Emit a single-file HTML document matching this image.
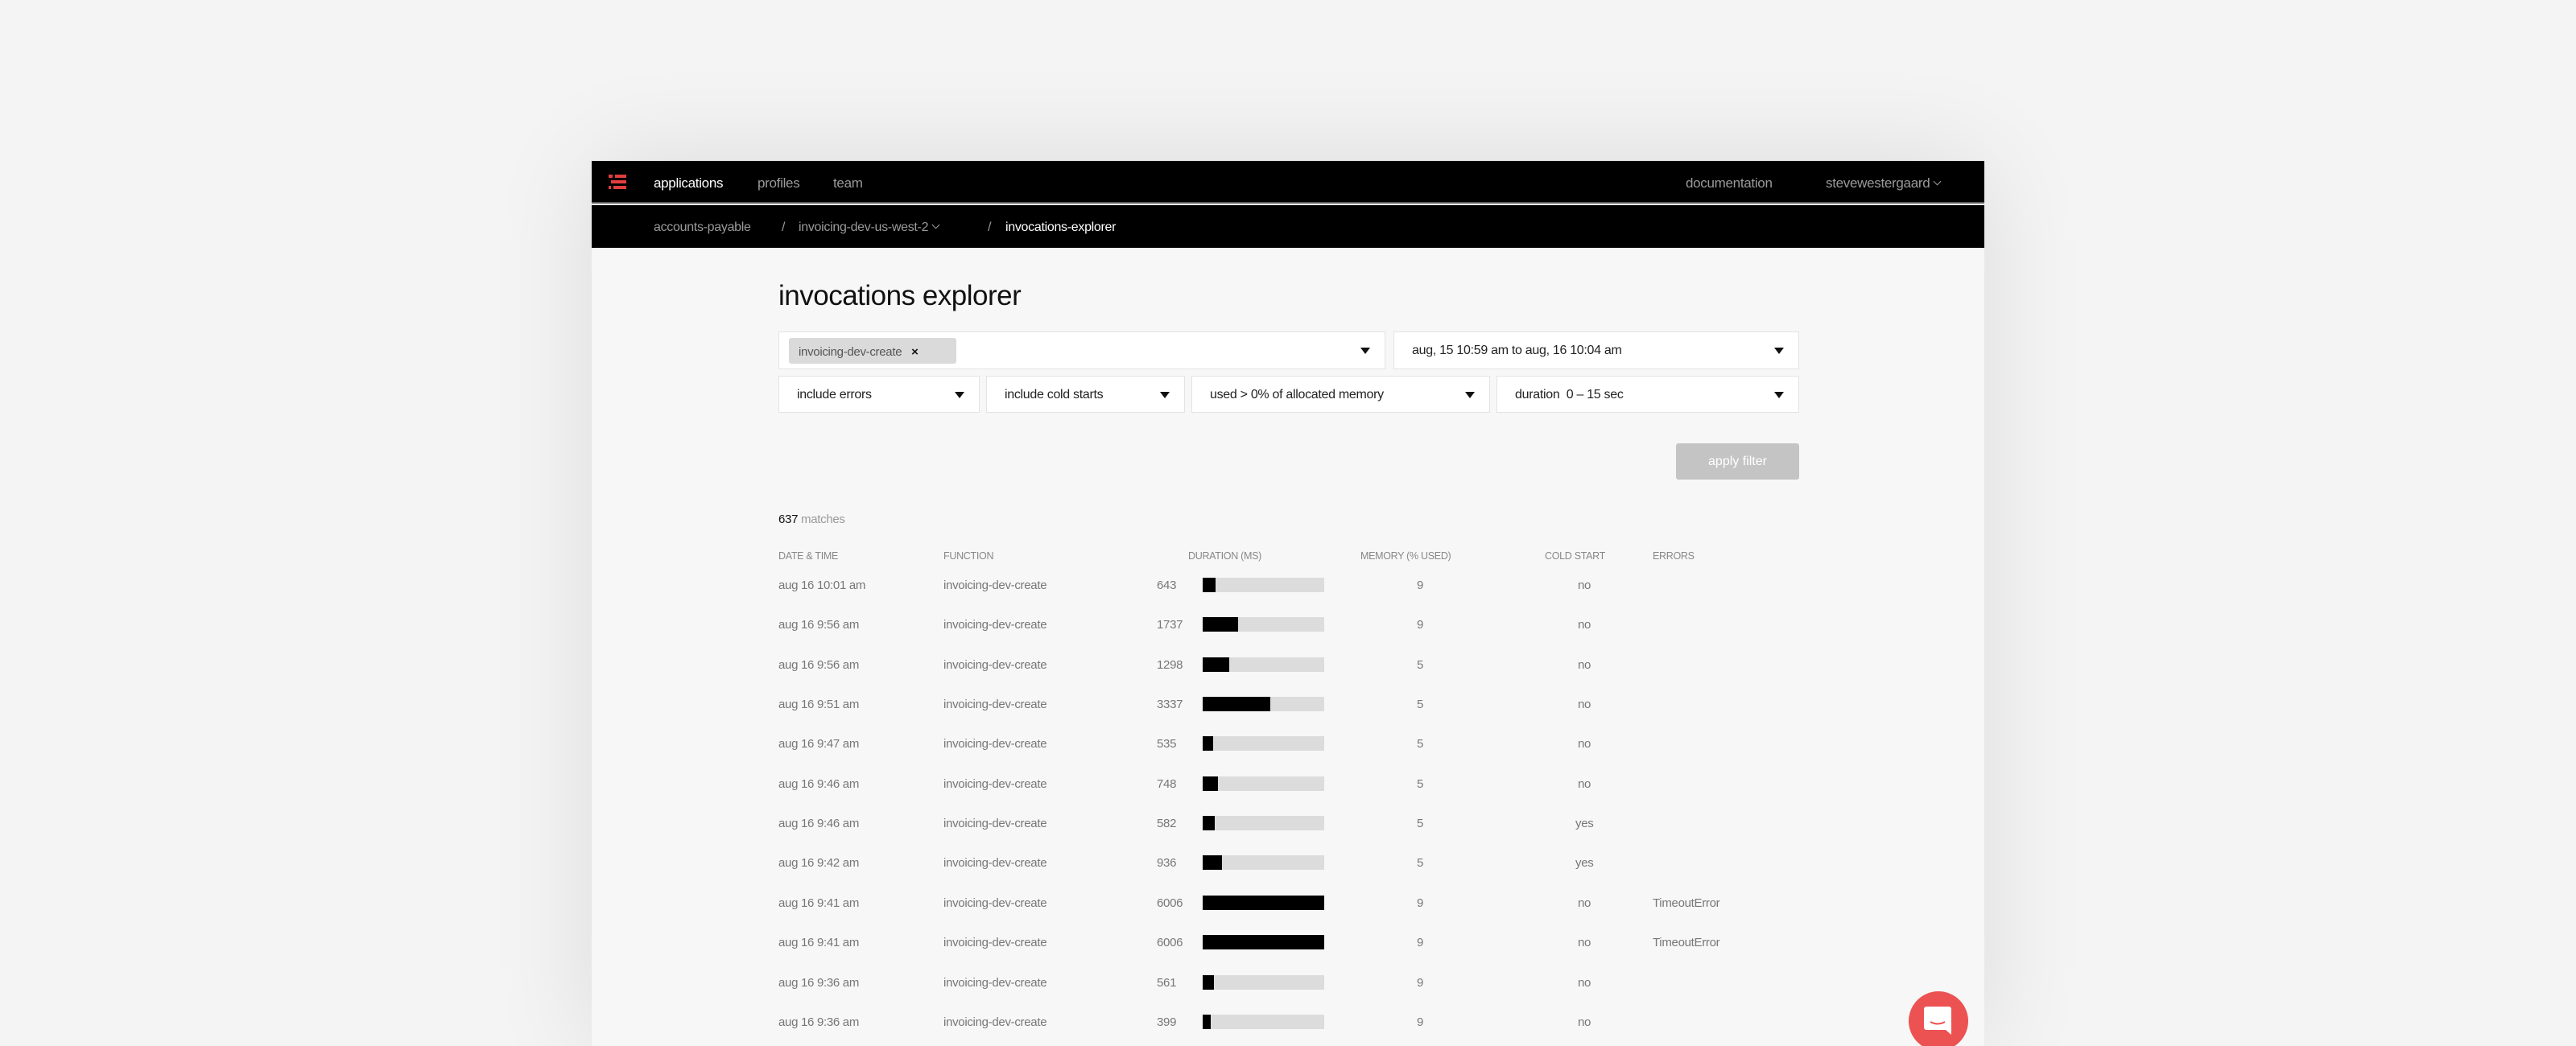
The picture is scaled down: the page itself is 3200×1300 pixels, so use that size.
<!DOCTYPE html>
<html><head><meta charset="utf-8"><style>
*{margin:0;padding:0;box-sizing:border-box}
html,body{width:3200px;height:1300px;overflow:hidden}
body{background:#f4f4f4;font-family:"Liberation Sans",sans-serif;position:relative}
.win{position:absolute;left:735px;top:200px;width:1730px;height:1100px;background:#f7f7f7;box-shadow:0 0 120px rgba(0,0,0,0.10)}
.nav{position:absolute;left:0;top:0;width:100%;height:53px;background:#000;border-bottom:2px solid #5a5a5a}
.sub{position:absolute;left:0;top:55px;width:100%;height:53px;background:#000}
.t{position:absolute;white-space:nowrap}
.nav .t{top:18px;font-size:17px;color:#9a9a9a;letter-spacing:-0.3px}
.sub .t{top:19px;font-size:16px;color:#9a9a9a;letter-spacing:-0.3px}
.cv{display:inline-block;width:7px;height:7px;border-right:1.5px solid #9a9a9a;border-bottom:1.5px solid #9a9a9a;transform:rotate(45deg);margin-left:6px;position:relative;top:-4px}
.box{position:absolute;background:#fff;border:1px solid #e3e3e3}
.box span{position:absolute;left:22px;top:14px;font-size:16px;color:#222;white-space:nowrap;letter-spacing:-0.3px}
.box i{position:absolute;right:18px;top:19px;width:0;height:0;border-left:6px solid transparent;border-right:6px solid transparent;border-top:8px solid #111}
.row .t{font-size:15px;color:#777;letter-spacing:-0.3px}
.hd{font-size:12.5px;color:#888;position:absolute;letter-spacing:-0.3px}
.bar{position:absolute;width:151px;height:18px;background:#dcdcdc}
.bar b{display:block;height:18px;background:#000}
</style></head><body>
<div class="win">
 <div class="nav">
  <svg style="position:absolute;left:21px;top:17px" width="23" height="18"><rect x="0" y="0" width="5" height="4" fill="#e23e3e"/><rect x="8" y="0" width="14" height="4" fill="#e23e3e"/><rect x="3" y="7" width="19" height="4" fill="#e23e3e"/><rect x="0" y="14" width="3" height="4" fill="#e23e3e"/><rect x="6" y="14" width="16" height="4" fill="#e23e3e"/></svg>
  <div class="t" style="left:77px;color:#fff">applications</div>
  <div class="t" style="left:206px">profiles</div>
  <div class="t" style="left:300px">team</div>
  <div class="t" style="left:1359px">documentation</div>
  <div class="t" style="left:1533px">stevewestergaard<span class="cv"></span></div>
 </div>
 <div class="sub">
  <div class="t" style="left:77px">accounts-payable</div>
  <div class="t" style="left:236px">/</div>
  <div class="t" style="left:257px">invoicing-dev-us-west-2<span class="cv"></span></div>
  <div class="t" style="left:492px">/</div>
  <div class="t" style="left:514px;color:#fff">invocations-explorer</div>
 </div>
 <div class="t" style="left:232px;top:148px;font-size:35px;color:#111;letter-spacing:-0.5px">invocations explorer</div>
 <div class="box" style="left:232px;top:212px;width:754px;height:47px"><div style="position:absolute;left:12px;top:7px;width:208px;height:32px;background:#dadada;border-radius:3px;font-size:15px;color:#555;padding:9px 0 0 12px;letter-spacing:-0.3px">invoicing-dev-create <b style="color:#111;margin-left:8px">×</b></div><i></i></div>
 <div class="box" style="left:996px;top:212px;width:504px;height:47px"><span>aug, 15 10:59 am to aug, 16 10:04 am</span><i></i></div>
 <div class="box" style="left:232px;top:267px;width:250px;height:46px"><span>include errors</span><i></i></div>
 <div class="box" style="left:490px;top:267px;width:247px;height:46px"><span>include cold starts</span><i></i></div>
 <div class="box" style="left:745px;top:267px;width:371px;height:46px"><span>used &gt; 0% of allocated memory</span><i></i></div>
 <div class="box" style="left:1124px;top:267px;width:376px;height:46px"><span>duration &nbsp;0 – 15 sec</span><i></i></div>
 <div style="position:absolute;left:1347px;top:351px;width:153px;height:45px;background:#c4c4c4;border-radius:3px;color:#fff;font-size:16px;text-align:center;line-height:45px">apply filter</div>
 <div class="t" style="left:232px;top:437px;font-size:15px;color:#999;letter-spacing:-0.3px"><span style="color:#111">637</span> matches</div>
 <div class="hd" style="left:232px;top:484px">DATE &amp; TIME</div>
 <div class="hd" style="left:437px;top:484px">FUNCTION</div>
 <div class="hd" style="left:741px;top:484px">DURATION (MS)</div>
 <div class="hd" style="left:955px;top:484px">MEMORY (% USED)</div>
 <div class="hd" style="left:1184px;top:484px">COLD START</div>
 <div class="hd" style="left:1318px;top:484px">ERRORS</div>
</div>
<div style="position:absolute;left:2371px;top:1232px;width:74px;height:74px;border-radius:50%;background:#ec5252"></div>
<svg style="position:absolute;left:2390px;top:1251px" width="36" height="38"><path d="M3 0h28a3 3 0 0 1 3 3v32l-7-6H3a3 3 0 0 1-3-3V3a3 3 0 0 1 3-3z" fill="#fff"/><path d="M8 19q9 5 18 0" stroke="#ec5252" stroke-width="2" fill="none"/></svg>
<div style="position:absolute;left:735px;top:3px;width:0;height:0">
<div class="row">
 <div class="t" style="left:232px;top:716px">aug 16 10:01 am</div><div class="t" style="left:437px;top:716px">invoicing-dev-create</div><div class="t" style="left:702px;top:716px">643</div><div class="bar" style="left:759px;top:715px"><b style="width:16px"></b></div><div class="t" style="left:1025px;top:716px">9</div><div class="t" style="left:1225px;top:716px">no</div>
 <div class="t" style="left:232px;top:765px">aug 16 9:56 am</div><div class="t" style="left:437px;top:765px">invoicing-dev-create</div><div class="t" style="left:702px;top:765px">1737</div><div class="bar" style="left:759px;top:764px"><b style="width:44px"></b></div><div class="t" style="left:1025px;top:765px">9</div><div class="t" style="left:1225px;top:765px">no</div>
 <div class="t" style="left:232px;top:815px">aug 16 9:56 am</div><div class="t" style="left:437px;top:815px">invoicing-dev-create</div><div class="t" style="left:702px;top:815px">1298</div><div class="bar" style="left:759px;top:814px"><b style="width:33px"></b></div><div class="t" style="left:1025px;top:815px">5</div><div class="t" style="left:1225px;top:815px">no</div>
 <div class="t" style="left:232px;top:864px">aug 16 9:51 am</div><div class="t" style="left:437px;top:864px">invoicing-dev-create</div><div class="t" style="left:702px;top:864px">3337</div><div class="bar" style="left:759px;top:863px"><b style="width:84px"></b></div><div class="t" style="left:1025px;top:864px">5</div><div class="t" style="left:1225px;top:864px">no</div>
 <div class="t" style="left:232px;top:913px">aug 16 9:47 am</div><div class="t" style="left:437px;top:913px">invoicing-dev-create</div><div class="t" style="left:702px;top:913px">535</div><div class="bar" style="left:759px;top:912px"><b style="width:13px"></b></div><div class="t" style="left:1025px;top:913px">5</div><div class="t" style="left:1225px;top:913px">no</div>
 <div class="t" style="left:232px;top:963px">aug 16 9:46 am</div><div class="t" style="left:437px;top:963px">invoicing-dev-create</div><div class="t" style="left:702px;top:963px">748</div><div class="bar" style="left:759px;top:962px"><b style="width:19px"></b></div><div class="t" style="left:1025px;top:963px">5</div><div class="t" style="left:1225px;top:963px">no</div>
 <div class="t" style="left:232px;top:1012px">aug 16 9:46 am</div><div class="t" style="left:437px;top:1012px">invoicing-dev-create</div><div class="t" style="left:702px;top:1012px">582</div><div class="bar" style="left:759px;top:1011px"><b style="width:15px"></b></div><div class="t" style="left:1025px;top:1012px">5</div><div class="t" style="left:1222px;top:1012px">yes</div>
 <div class="t" style="left:232px;top:1061px">aug 16 9:42 am</div><div class="t" style="left:437px;top:1061px">invoicing-dev-create</div><div class="t" style="left:702px;top:1061px">936</div><div class="bar" style="left:759px;top:1060px"><b style="width:24px"></b></div><div class="t" style="left:1025px;top:1061px">5</div><div class="t" style="left:1222px;top:1061px">yes</div>
 <div class="t" style="left:232px;top:1111px">aug 16 9:41 am</div><div class="t" style="left:437px;top:1111px">invoicing-dev-create</div><div class="t" style="left:702px;top:1111px">6006</div><div class="bar" style="left:759px;top:1110px"><b style="width:151px"></b></div><div class="t" style="left:1025px;top:1111px">9</div><div class="t" style="left:1225px;top:1111px">no</div><div class="t" style="left:1318px;top:1111px">TimeoutError</div>
 <div class="t" style="left:232px;top:1160px">aug 16 9:41 am</div><div class="t" style="left:437px;top:1160px">invoicing-dev-create</div><div class="t" style="left:702px;top:1160px">6006</div><div class="bar" style="left:759px;top:1159px"><b style="width:151px"></b></div><div class="t" style="left:1025px;top:1160px">9</div><div class="t" style="left:1225px;top:1160px">no</div><div class="t" style="left:1318px;top:1160px">TimeoutError</div>
 <div class="t" style="left:232px;top:1210px">aug 16 9:36 am</div><div class="t" style="left:437px;top:1210px">invoicing-dev-create</div><div class="t" style="left:702px;top:1210px">561</div><div class="bar" style="left:759px;top:1209px"><b style="width:14px"></b></div><div class="t" style="left:1025px;top:1210px">9</div><div class="t" style="left:1225px;top:1210px">no</div>
 <div class="t" style="left:232px;top:1259px">aug 16 9:36 am</div><div class="t" style="left:437px;top:1259px">invoicing-dev-create</div><div class="t" style="left:702px;top:1259px">399</div><div class="bar" style="left:759px;top:1258px"><b style="width:10px"></b></div><div class="t" style="left:1025px;top:1259px">9</div><div class="t" style="left:1225px;top:1259px">no</div>
</div>
</div>
</body></html>
